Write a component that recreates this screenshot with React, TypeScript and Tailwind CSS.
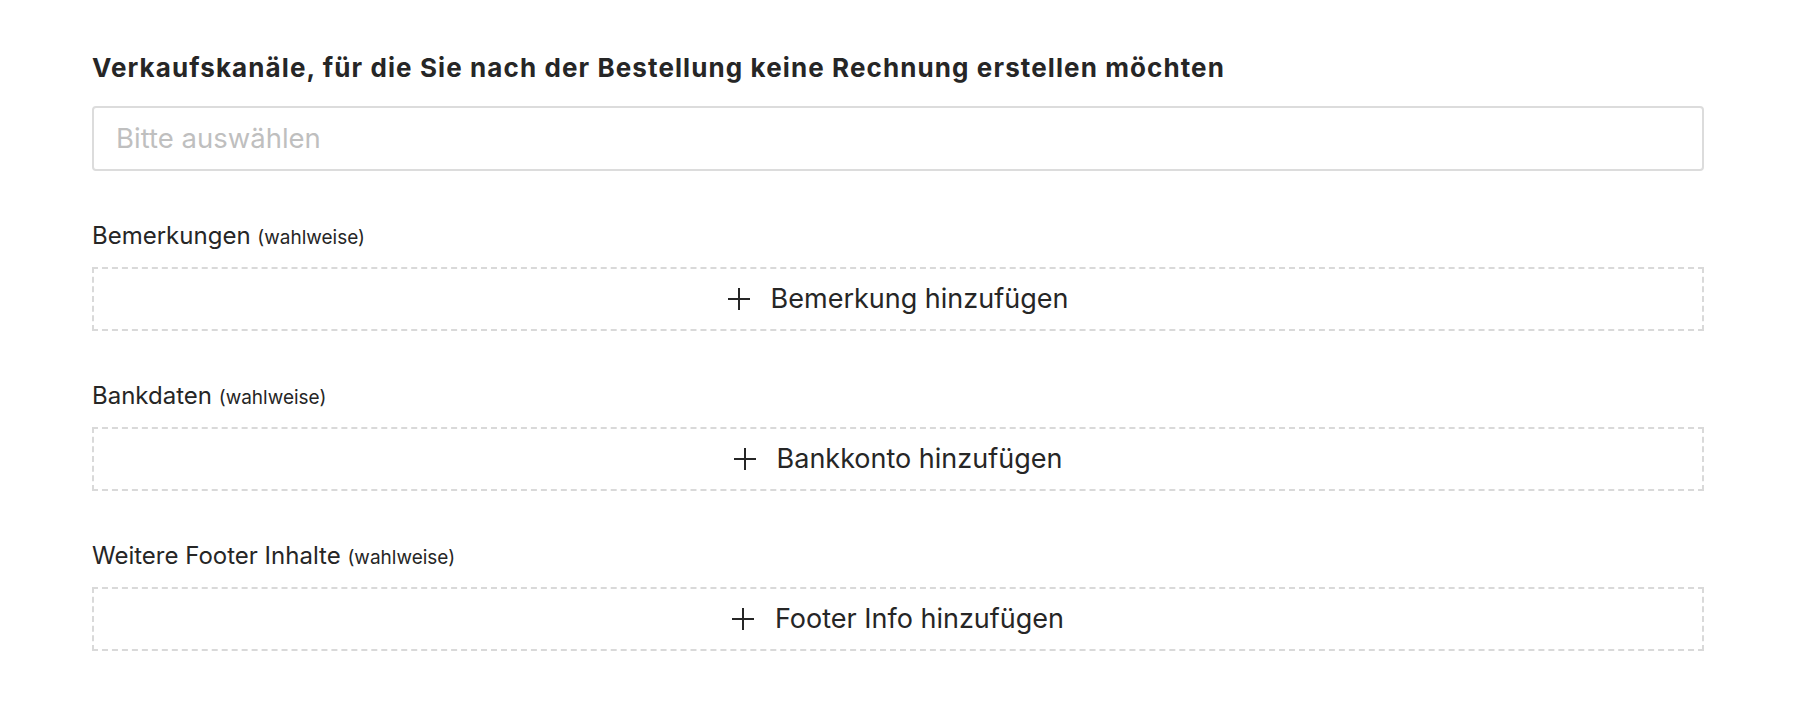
const sections = [
    { label: "Bemerkungen", action: "Bemerkung hinzufügen" },
    { label: "Bankdaten", action: "Bankkonto hinzufügen" },
    { label: "Weitere Footer Inhalte", action: "Footer Info hinzufügen" },
];

function PlusIcon() {
    return (
        <svg width="22" height="22" viewBox="0 0 22 22" fill="none" stroke="currentColor" strokeWidth="2" className="shrink-0">
            <line x1="11" y1="0" x2="11" y2="22" />
            <line x1="0" y1="11" x2="22" y2="11" />
        </svg>
    );
}

export default function App() {
    return (
        <div className="min-h-screen bg-white pl-[92px] pr-[98px] pt-[52px] font-['Inter',sans-serif] text-[#262626]">
            {/* Heading + select */}
            <h2 className="text-[26px] leading-[32px] font-bold tracking-[1.1px]">
                Verkaufskanäle, für die Sie nach der Bestellung keine Rechnung erstellen möchten
            </h2>
            <div className="mt-[22px] h-[65px] rounded-[4px] border-2 border-[#dcdcdc] px-[22px] flex items-center">
                <span className="text-[27.5px] text-[#bfbfbf]">Bitte auswählen</span>
            </div>

            {/* Optional sections */}
            {sections.map((s) => (
                <div key={s.label} className="mt-[51px]">
                    <div className="text-[24px] leading-[28px]">
                        {s.label} <span className="text-[19px] leading-none">(wahlweise)</span>
                    </div>
                    <button className="mt-[17px] w-full h-[64px] border-2 border-dashed border-[#d9d9d9] flex items-center justify-center gap-[21px] text-[27px]">
                        <PlusIcon />
                        <span>{s.action}</span>
                    </button>
                </div>
            ))}
        </div>
    );
}
